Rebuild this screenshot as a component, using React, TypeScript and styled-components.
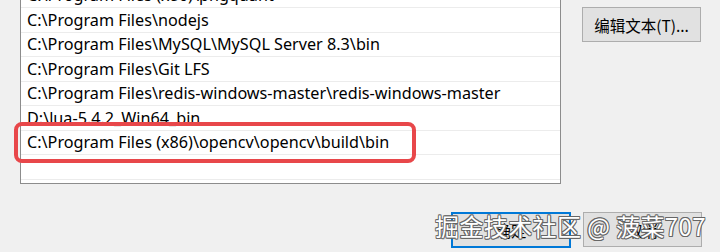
import styled, { createGlobalStyle } from "styled-components"

const GlobalStyle = createGlobalStyle`
    html, body {
        margin: 0;
        padding: 0;
        background: #f0f0f0;
    }
`

const Page = styled.div`
    position: relative;
    width: 720px;
    height: 252px;
    overflow: hidden;
    background: #f0f0f0;
    font-family: "Noto Sans", "Noto Sans CJK SC", sans-serif;
    display: flex;
    flex-direction: column;
`

const Top = styled.div`
    display: flex;
    align-items: flex-start;
`

const ListBox = styled.div`
    margin: -16.5px 0 0 20px;
    width: 541px;
    box-sizing: border-box;
    background: #fff;
    border: 1px solid #8c8c8c;
    border-top: none;
    padding-bottom: 3.5px;
`

const Row = styled.div`
    position: relative;
    height: 24.5px;
    box-sizing: border-box;
    border-bottom: 1px solid #ececec;
    padding-left: 6px;
    display: flex;
    align-items: center;
    font-size: 16.2px;
    color: #000;
    white-space: nowrap;
`

const Mark = styled.div`
    position: absolute;
    left: -7px;
    top: -8.5px;
    width: 402px;
    height: 41px;
    box-sizing: border-box;
    border: 4px solid #e8474a;
    border-radius: 8px;
`

const Side = styled.div`
    margin-left: 21px;
    padding-top: 7px;
`

const Button = styled.div<{ $default?: boolean }>`
    width: ${p => (p.$default ? "120px" : "119px")};
    height: ${p => (p.$default ? "36px" : "35px")};
    box-sizing: border-box;
    background: #e1e1e1;
    border: ${p => (p.$default ? "2px solid #0078d7" : "1px solid #adadad")};
    display: flex;
    align-items: center;
    justify-content: center;
    font-size: 15.5px;
    color: #000;
    font-family: "Noto Sans CJK SC", sans-serif;
`

const Bottom = styled.div`
    display: flex;
    justify-content: flex-end;
    gap: 12px;
    margin-top: 28px;
    padding-right: 18px;
`

const Watermark = styled.div`
    position: absolute;
    right: 14px;
    bottom: 12px;
    font-family: "Noto Sans CJK SC", sans-serif;
    font-size: 24px;
    line-height: 28px;
    letter-spacing: 0.4px;
    color: #fff;
    white-space: nowrap;
    text-shadow:
        0.8px 0 0 #666, -0.8px 0 0 #666, 0 0.8px 0 #666, 0 -0.8px 0 #666,
        0.8px 0.8px 0 #666, -0.8px -0.8px 0 #666, 0.8px -0.8px 0 #666, -0.8px 0.8px 0 #666;
`

const paths = [
    "C:\\Program Files (x86)\\pngquant",
    "C:\\Program Files\\nodejs",
    "C:\\Program Files\\MySQL\\MySQL Server 8.3\\bin",
    "C:\\Program Files\\Git LFS",
    "C:\\Program Files\\redis-windows-master\\redis-windows-master",
    "D:\\lua-5.4.2_Win64_bin",
    "C:\\Program Files (x86)\\opencv\\opencv\\build\\bin",
    "",
]

const App = () => {
    return <Page>
        <GlobalStyle />
        <Top>
            <ListBox>
                {paths.map((p, key) => {
                    return <Row key={key}>
                        {p}
                        {key === 6 && <Mark />}
                    </Row>
                })}
            </ListBox>
            <Side>
                <Button>编辑文本(T)...</Button>
            </Side>
        </Top>
        <Bottom>
            <Button $default>确定</Button>
            <Button>取消</Button>
        </Bottom>
        <Watermark>掘金技术社区 @ 菠菜707</Watermark>
    </Page>
}

export default App
